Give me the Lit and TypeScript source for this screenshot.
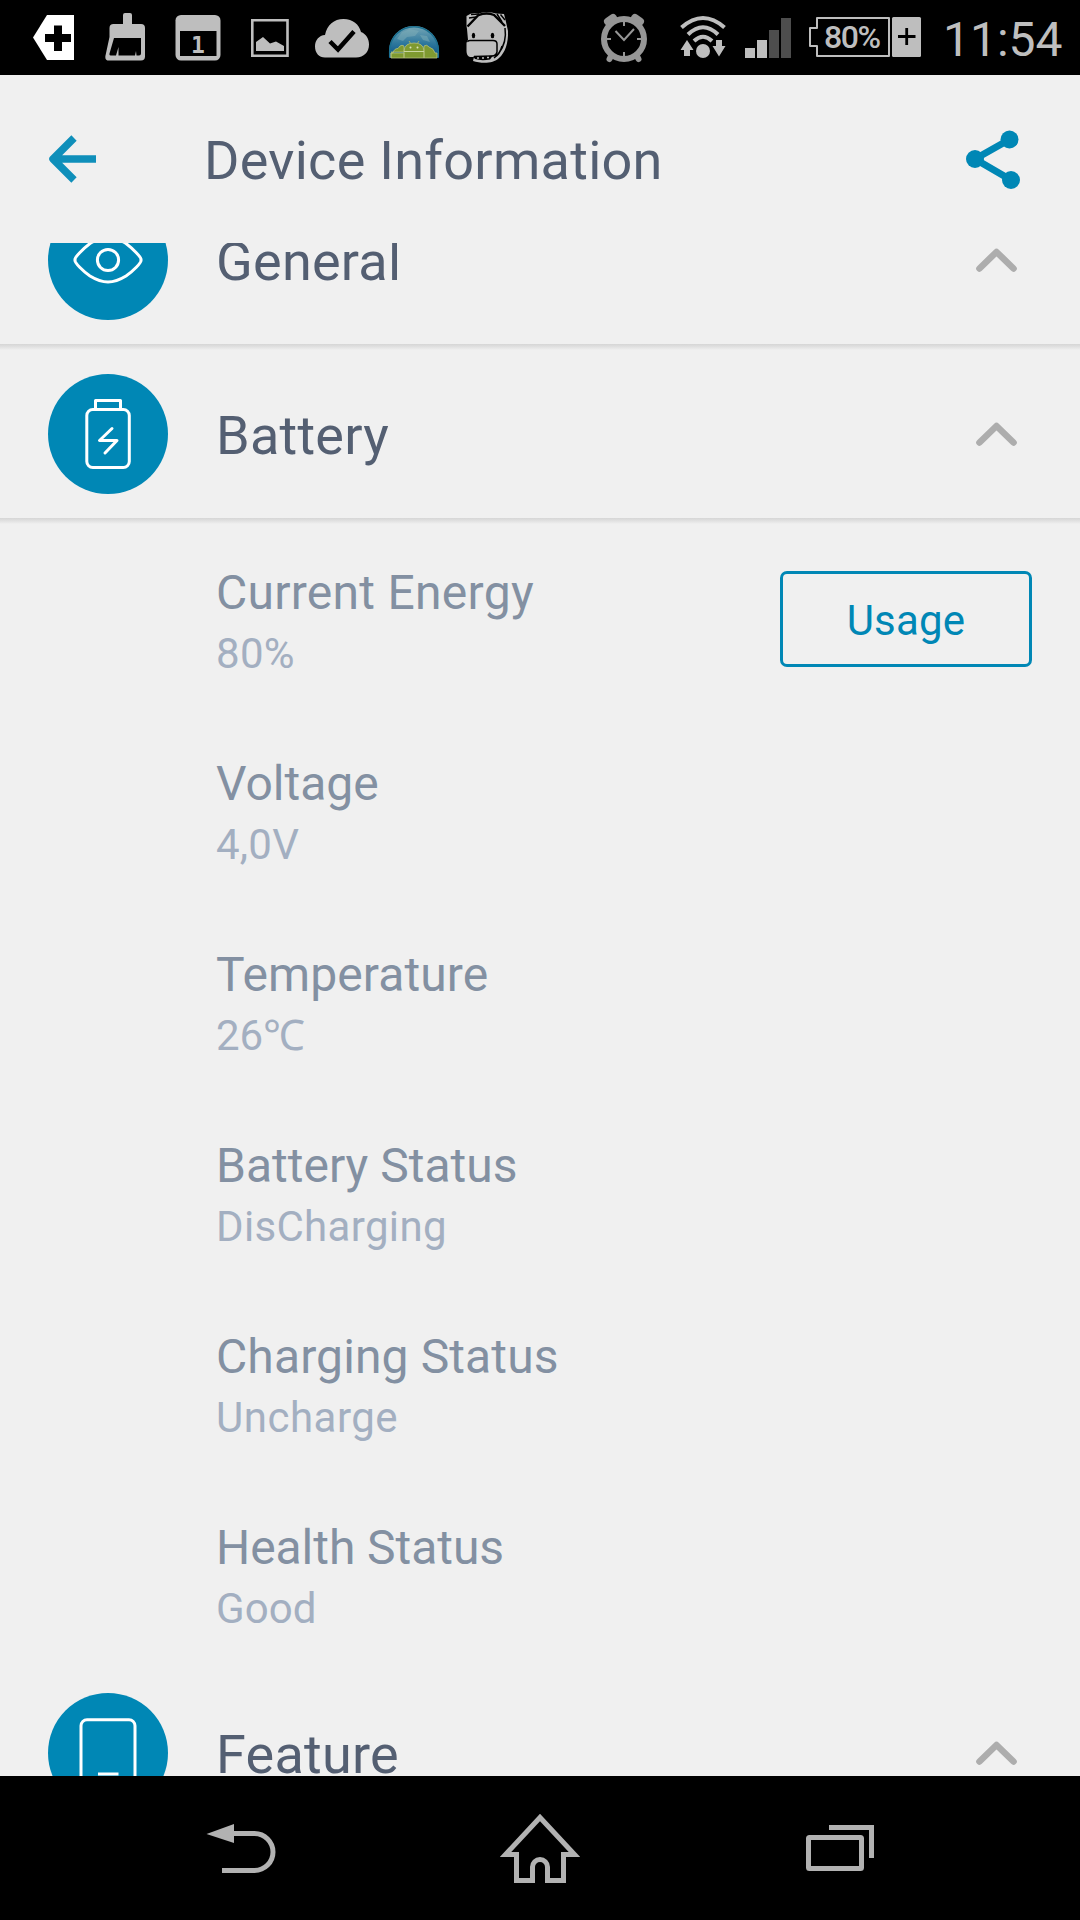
import { LitElement, html, css, svg } from "lit";
import { customElement, property } from "lit/decorators.js";

const statusIcon = (x: number, w: number, cls: string, body: unknown) => html`
  <svg class="si ${cls}" width=${w} height="75" viewBox="${x} 0 ${w} 75">${body}</svg>`;

const rowGlyphs: Record<string, unknown> = {
  eye: svg`<path d="M27 60C25.5 58 36 48 42 43.5C55 35.500 65 35.500 78 43.500C84 48 94.500 58 93 60C94.500 62 84 72 78 76C65 84 55 84 42 76C36 72 25.500 62 27 60Z"/><circle cx="60" cy="60" r="10.600"/>`,
  battery: svg`<rect x="38.800" y="35.500" width="42.500" height="58" rx="6"/><path d="M47.500 35V26.500H72.500V35M64 54.500L51.500 66.500H69L57 79" stroke-linejoin="round" stroke-linecap="round"/>`,
  phone: svg`<rect x="33" y="26.800" width="54" height="74" rx="6"/><path d="M50 81H70.500"/>`,
};

@customElement("section-row")
export class SectionRow extends LitElement {
  @property() icon = "";
  @property() heading = "";
  static styles = css`
    :host { display: block; }
    .row { box-sizing: border-box; height: 174px; padding: 6px 60px 0 48px; display: flex; align-items: center; }
    .disc { width: 120px; height: 120px; border-radius: 50%; background: #0087b5; flex: none; }
    .disc svg { display: block; fill: none; stroke: #fff; stroke-width: 3; }
    .title { flex: 1; margin-left: 48px; padding-top: 4px; font-size: 54px; line-height: 64px; letter-spacing: .25px; color: #545f72; }
    .chev { fill: none; stroke: #adadad; stroke-width: 6.6; stroke-linecap: round; stroke-linejoin: round; flex: none; }
  `;
  render() {
    return html`<div class="row">
      <div class="disc"><svg width="120" height="120" viewBox="0 0 120 120">${rowGlyphs[this.icon]}</svg></div>
      <div class="title">${this.heading}</div>
      <svg class="chev" width="48" height="48" viewBox="0 0 48 48"><path d="M7.500 32.500L24.500 16L41.500 32.500"/></svg>
    </div>`;
  }
}

@customElement("app-root")
export class AppRoot extends LitElement {
  static styles = css`
    :host { display: block; font-family: Roboto, "Liberation Sans", sans-serif; }
    .screen { width: 1080px; height: 1920px; background: #f0f0f0; display: flex; flex-direction: column; overflow: hidden; }
    .status { height: 75px; background: #000; display: flex; flex: none; color: #bebebe; }
    .si { flex: none; display: block; fill: #bebebe; }
    .first { margin-left: 33px; } .broom { margin-left: 31px; } .cal { margin-left: 30px; }
    .pic { margin-left: 29px; } .cloud { margin-left: 25px; } .dome { margin-left: 19px; }
    .mascot { margin-left: 26px; } .alarm { margin-left: 91px; } .wifi { margin-left: 32px; }
    .bars { margin-left: 19px; } .batt { margin-left: 17px; }
    .pct { font: 500 32px Roboto, sans-serif; }
    .day { font: bold 23px "DejaVu Sans Mono", monospace; }
    .clock { margin-left: 21px; font-size: 48px; line-height: 56px; padding-top: 12px; white-space: nowrap; }
    .header { height: 168px; flex: none; display: flex; align-items: center; padding: 0 48px; }
    .back { fill: none; stroke: #0f8fba; stroke-width: 7.5; stroke-linejoin: round; }
    .title { flex: 1; margin-left: 108px; padding-top: 3px; font-size: 54px; line-height: 64px; letter-spacing: .27px; color: #545f72; }
    .share { fill: #0087b5; stroke: none; margin-right: 10px; }
    .share path { fill: none; stroke: #0087b5; stroke-width: 7; }
    .list { flex: 1; min-height: 0; overflow: hidden; }
    .scroll { margin-top: -73px; }
    .divider { height: 6px; margin-bottom: -6px; background: linear-gradient(#d6d6d6, #e0e0e0 45%, #f0f0f0); }
    .details { height: 1145px; display: flex; flex-direction: column; }
    .item { flex: none; height: 191px; display: flex; justify-content: space-between; padding: 0 48px 0 216px; }
    .text { padding-top: 47px; }
    .label { font-size: 48px; line-height: 56px; color: #8390a2; }
    .value { font-size: 42px; line-height: 50px; margin-top: 8px; color: #a3afc1; }
    .usage { box-sizing: border-box; width: 252px; height: 96px; margin-top: 53px; padding: 3px 0 0; border: 3px solid #0087b5; border-radius: 7px; background: none; color: #0087b5; font: 42px Roboto, sans-serif; letter-spacing: .2px; }
    .nav { height: 144px; flex: none; background: #000; display: flex; justify-content: space-between; align-items: center; padding: 0 202px; }
    .nav svg { fill: none; stroke: #b2b2b2; stroke-width: 5; display: block; }
    .nav .solid { fill: #b2b2b2; stroke: none; }
  `;

  private items = [
    { label: "Current Energy", value: "80%", track: 0.27, valueTrack: 0.3 },
    { label: "Voltage", value: "4,0V", track: 0, valueTrack: 0.25 },
    { label: "Temperature", value: "26℃", track: 0.1, valueTrack: 0 },
    { label: "Battery Status", value: "DisCharging", track: 0, valueTrack: 0.33 },
    { label: "Charging Status", value: "Uncharge", track: 0.12, valueTrack: 0.5 },
    { label: "Health Status", value: "Good", track: -0.06, valueTrack: 0.1 },
  ];

  private statusBar() {
    return html`<div class="status">
      ${statusIcon(33, 41, "first", svg`<path fill="#fff" d="M33 37.500L47 15H74V60H47Z"/><path fill="#000" d="M54 25.500h8V34h9v8h-9v9h-8v-9h-9v-8h9Z"/>`)}
      ${statusIcon(105, 40, "broom", svg`<path d="M123 24V15q0-2 2-2h5q2 0 2 2v9h9q4 0 4 4V56.500q0 4-4 4H109q-4.500 0-3.500-5L109.500 37V28q0-4 4-4Z"/><path fill="#000" d="M114 38H141V53.500q0 2-2 2h-2.500L136 51L135 55.500H118.500V47L116 55.500H110.500q-1.500 0-1-2Z"/>`)}
      ${statusIcon(175, 46, "cal", svg`<rect x="175.500" y="15" width="45" height="45.500" rx="5.500"/><rect x="180" y="31" width="36.500" height="25" fill="#000"/><text class="day" x="198" y="52.500" text-anchor="middle">1</text>`)}
      ${statusIcon(250, 40, "pic", svg`<path fill="none" stroke="#bebebe" stroke-width="2.600" d="M252.300 20.300H287.500V55.700H252.300Z"/><path d="M256 51V42L263 37L270 43.500L276 41.500L284 46V51Z"/>`)}
      ${statusIcon(315, 54, "cloud", svg`<path d="M325 57.500C319 57.500 315 53 315 46.500C315 40 319 35.500 325 35C327 25 334 19 343.500 19C353 19 359 24.500 361 32C366 34 369 38.500 369 44.500C369 52 364 57.500 356 57.500Z"/><path fill="none" stroke="#000" stroke-width="4.500" d="M330 41.500L338 49.500L354 31.500"/>`)}
      ${statusIcon(388, 52, "dome", svg`<defs><linearGradient id="sky" x1="0" y1="0" x2="0" y2="1"><stop offset="0" stop-color="#77a7b6"/><stop offset=".55" stop-color="#2d779c"/><stop offset="1" stop-color="#064f87"/></linearGradient></defs>
        <path fill="url(#sky)" d="M389 58V51C389 37 400 26 414 26S439 37 439 51V58Z"/>
        <path fill="none" stroke="#1c7090" stroke-width="1.500" d="M389.700 57V51C389.700 37.500 400.500 26.700 414 26.700S438.300 37.500 438.300 51V57"/>
        <path fill="#81afb8" opacity=".5" d="M402 32l8-3 9 2-4 5-8 1-4 4-6-2zM420 35l7 1 3 6-7-2z"/>
        <path fill="#7f9a30" stroke="#b5c07c" stroke-width=".8" d="M391 58V53H393Q394 48.500 398 48.500L400 46Q402 44.500 404 46V52H391M404 58V51Q404.500 43 414 43T424 51V58ZM424 58V46Q427 44 429 47Q434 48.500 435 53H437V58ZM391 53H404V58H391Z"/>
        <path stroke="#a4b360" stroke-width="1" d="M409 41l2 3M419 41l-2 3"/><path stroke="#c9d6a0" d="M404 51.500H424"/><circle cx="410.500" cy="47.500" r="1" fill="#dde4c0"/><circle cx="417.500" cy="47.500" r="1" fill="#dde4c0"/>`)}
      ${statusIcon(466, 44, "mascot", svg`<path d="M466.500 16Q472 12 478 13.500Q488 11 496 13.500L504 14L506 22L508 31C508.500 43 505 53 499 58C493 64 481 63.500 473 61L474 57H470Q466.500 56 466.500 51V43Q467 41 468 40L467 29L466.500 26Z"/>
        <g fill="none" stroke="#000"><path stroke-width="2.400" d="M467.500 26.500L478.500 15Q487 12 494 15L505 26"/><path stroke-width="1.500" d="M469 18L476 17M471 14.500L479 14M497 14L502 22M500.500 14.500L505 20M468 42Q467.500 40.500 470 40.500H493Q497 40.500 497 44V52Q496 56 492 56L474 56.500M502 46Q500 54 494 58M505 28Q507 42 499 53"/></g>
        <ellipse cx="473.500" cy="35.500" rx="1.700" ry="2.800" fill="#000"/><ellipse cx="492.500" cy="35.500" rx="1.800" ry="2.800" fill="#000"/>
        <path fill="#000" d="M473 56.500Q484 57 493 55.500L490 59.500Q481 61 475 59Z"/><path stroke="#bebebe" stroke-width="1.500" d="M477 58h2M482 58h2M487 57.500h2"/>`)}
      ${statusIcon(601, 46, "alarm", svg`<g fill="none" stroke="#969696"><circle cx="624" cy="39" r="20" stroke-width="6"/><path stroke-width="8" stroke-linecap="round" d="M608 21.500L613 18M640 21.500L635 18"/><path stroke-width="6" stroke-linecap="round" d="M611 56L609.500 59M637 56L638.500 59"/><path stroke-width="2" d="M624 20V26M624 52V58M605 39H611M637 39H643M615.500 31L624 40L634 29"/></g>`)}
      ${statusIcon(679, 47, "wifi", svg`<g fill="none" stroke="#bebebe" stroke-width="4"><path d="M681.500 27.500Q703 8.500 724.500 27.500M688 34.500Q703 20 718 34.500M694 41Q703 32.500 712 41"/></g><circle cx="703" cy="51" r="7"/><path d="M687 40L693.500 50H690V56H684V50H680.500ZM716 40H722V46H725.500L719 56.500L712.500 46H716Z"/>`)}
      ${statusIcon(745, 46, "bars", svg`<path d="M745 48h10v10h-10ZM757 40h10v18h-10Z"/><path fill="#4d4d4d" d="M769 30h10v28h-10ZM781 18h10v40h-10Z"/>`)}
      ${statusIcon(808, 114, "batt", svg`<path fill="none" stroke="#bebebe" stroke-width="2" stroke-linejoin="round" d="M817 18H889V56H817V46H810V28H817Z"/><rect x="892" y="17" width="29" height="40" rx="1.500"/><path stroke="#000" stroke-width="2.800" d="M898 36.500H915.500M906.700 28V45"/><text class="pct" x="824" y="48" textLength="57">80%</text>`)}
      <span class="clock">11:54</span>
    </div>`;
  }

  render() {
    return html`<div class="screen">
      ${this.statusBar()}
      <div class="header">
        <svg class="back" width="48" height="48" viewBox="0 0 48 48"><path d="M26 3L5 24L26 45M5 24H48"/></svg>
        <div class="title">Device Information</div>
        <svg class="share" width="56" height="60" viewBox="966 129 56 60"><circle cx="1009.500" cy="139.500" r="9"/><circle cx="975" cy="159" r="9"/><circle cx="1011" cy="180" r="9"/><path d="M1009.500 139.500L975 159L1011 180"/></svg>
      </div>
      <div class="list"><div class="scroll">
        <section-row icon="eye" heading="General"></section-row>
        <div class="divider"></div>
        <section-row icon="battery" heading="Battery"></section-row>
        <div class="divider"></div>
        <div class="details">
          ${this.items.map((it, i) => html`<div class="item">
            <div class="text">
              <div class="label" style="letter-spacing:${it.track}px">${it.label}</div>
              <div class="value" style="letter-spacing:${it.valueTrack}px">${it.value}</div>
            </div>
            ${i === 0 ? html`<button class="usage">Usage</button>` : ""}
          </div>`)}
        </div>
        <section-row icon="phone" heading="Feature"></section-row>
      </div></div>
      <div class="nav">
        <svg width="76" height="72" viewBox="202 1812 76 72"><path class="solid" d="M206.500 1834L234 1824V1843Z"/><path d="M233 1833.500H254.500A18.500 18.500 0 0 1 254.500 1870.500H222"/></svg>
        <svg width="80" height="72" viewBox="500 1812 80 72"><path stroke-linejoin="miter" d="M540 1817.500L505.500 1854.500H516.500V1880.500H532.500V1867A7.500 7.500 0 0 1 547.500 1867V1880.500H563.500V1854.500H574.500Z"/></svg>
        <svg width="76" height="72" viewBox="802 1812 76 72"><rect x="808.500" y="1837.500" width="53" height="31" rx="1"/><path d="M829 1827.500H871.500V1858"/></svg>
      </div>
    </div>`;
  }
}
